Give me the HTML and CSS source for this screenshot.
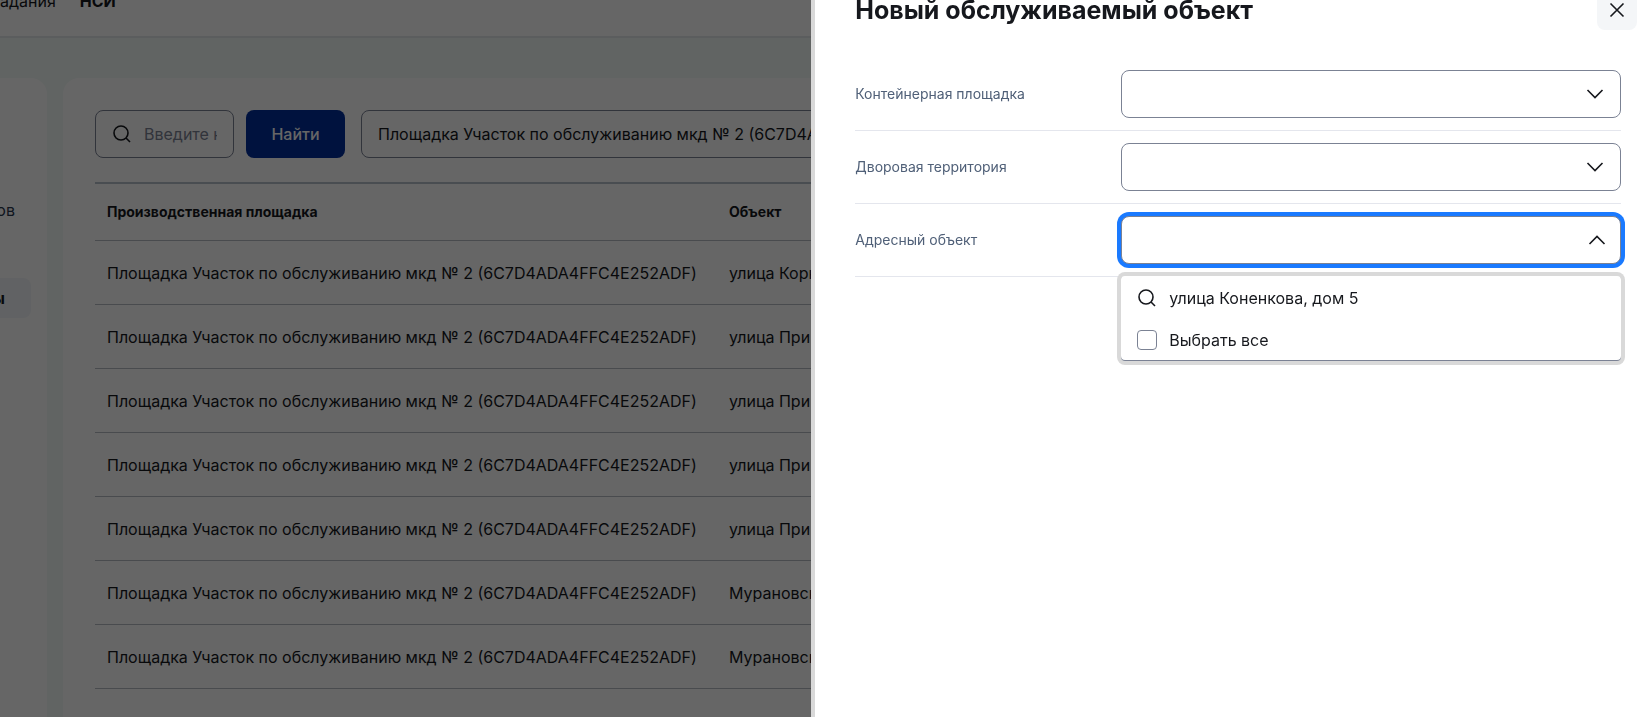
FILE: index.html
```html
<!DOCTYPE html>
<html lang="ru">
<head>
<meta charset="utf-8">
<title>Новый обслуживаемый объект</title>
<link rel="stylesheet" href="styles.css">
</head>
<body>
<div class="page">
  <header class="topbar">
    <nav class="topnav">
      <a href="#">адания</a>
      <a href="#" class="topnav-current">НСИ</a>
    </nav>
  </header>
  <div class="workspace">
    <aside class="sidebar">
      <a href="#" class="side-link">ов</a>
      <a href="#" class="side-link side-link-current">ы</a>
    </aside>
    <main class="content">
      <div class="toolbar">
        <label class="search">
          <svg class="icon" viewBox="0 0 24 24" aria-hidden="true"><circle cx="11" cy="11" r="7"/><path d="M16 16l4 4"/></svg>
          <input type="text" placeholder="Введите название" aria-label="Поиск">
        </label>
        <button class="find" type="button">Найти</button>
        <select class="site" aria-label="Площадка">
          <option>Площадка Участок по обслуживанию мкд № 2 (6C7D4ADA4FFC4E252ADF)</option>
        </select>
      </div>
      <table class="objects">
        <thead><tr><th class="col-site">Производственная площадка</th><th>Объект</th></tr></thead>
        <tbody>
          <tr><td>Площадка Участок по обслуживанию мкд № 2 (6C7D4ADA4FFC4E252ADF)</td><td>улица Корн</td></tr>
          <tr><td>Площадка Участок по обслуживанию мкд № 2 (6C7D4ADA4FFC4E252ADF)</td><td>улица При</td></tr>
          <tr><td>Площадка Участок по обслуживанию мкд № 2 (6C7D4ADA4FFC4E252ADF)</td><td>улица При</td></tr>
          <tr><td>Площадка Участок по обслуживанию мкд № 2 (6C7D4ADA4FFC4E252ADF)</td><td>улица При</td></tr>
          <tr><td>Площадка Участок по обслуживанию мкд № 2 (6C7D4ADA4FFC4E252ADF)</td><td>улица При</td></tr>
          <tr><td>Площадка Участок по обслуживанию мкд № 2 (6C7D4ADA4FFC4E252ADF)</td><td>Мурановск</td></tr>
          <tr><td>Площадка Участок по обслуживанию мкд № 2 (6C7D4ADA4FFC4E252ADF)</td><td>Мурановск</td></tr>
        </tbody>
      </table>
    </main>
  </div>
</div>

<div class="overlay">
  <section class="drawer" role="dialog" aria-labelledby="drawer-title">
    <div class="drawer-head">
      <h1 id="drawer-title">Новый обслуживаемый объект</h1>
      <button class="close" type="button" aria-label="Закрыть">
        <svg class="icon" viewBox="0 0 24 24" aria-hidden="true"><path d="M5.500 5.500l13 13M18.500 5.500l-13 13"/></svg>
      </button>
    </div>
    <form class="form">
      <div class="row">
        <label for="container">Контейнерная площадка</label>
        <div class="field">
          <select id="container"><option></option></select>
          <svg class="icon chevron" viewBox="0 0 24 24" aria-hidden="true"><path d="M4.500 8l7.500 7.500L19.500 8"/></svg>
        </div>
      </div>
      <div class="row">
        <label for="yard">Дворовая территория</label>
        <div class="field">
          <select id="yard"><option></option></select>
          <svg class="icon chevron" viewBox="0 0 24 24" aria-hidden="true"><path d="M4.500 8l7.500 7.500L19.500 8"/></svg>
        </div>
      </div>
      <div class="row">
        <label for="address">Адресный объект</label>
        <div class="field field-open">
          <select id="address"><option></option></select>
          <svg class="icon chevron" viewBox="0 0 24 24" aria-hidden="true"><path d="M4.500 16l7.500-7.500 7.500 7.500"/></svg>
          <div class="popup">
            <label class="popup-row popup-find">
              <svg class="icon" viewBox="0 0 24 24" aria-hidden="true"><circle cx="11" cy="11" r="7"/><path d="M16 16l4 4"/></svg>
              <input class="popup-search" type="text" value="улица Коненкова, дом 5" aria-label="Поиск адреса">
            </label>
            <label class="popup-row"><input class="check" type="checkbox">Выбрать все</label>
          </div>
        </div>
      </div>
    </form>
  </section>
</div>
</body>
</html>
```
FILE: styles.css
```css
* { box-sizing: border-box; }

body {
  margin: 0;
  height: 100vh;
  overflow: hidden;
  color: #16181d;
  background: #f3faf7;
  font: 16px/24px Inter, "Open Sans", sans-serif;
}

a { color: inherit; text-decoration: none; }

button, input, select {
  margin: 0;
  font: inherit;
  color: inherit;
}

.icon {
  flex: none;
  width: 24px;
  height: 24px;
  fill: none;
  stroke: #16181d;
  stroke-width: 1.6;
}

/* The page behind the drawer, scrolled down by half of its top bar. */
.page {
  display: flex;
  flex-direction: column;
  margin-top: -36px;
  height: calc(100vh + 36px);
}

.topbar {
  flex: none;
  display: flex;
  align-items: center;
  height: 74px;
  padding-top: 2px;
  background: #fff;
  border-bottom: 2px solid #e4e9ec;
}

.topnav { display: flex; gap: 24px; }
.topnav-current { font-weight: 700; }

.workspace {
  flex: 1;
  display: flex;
  gap: 16px;
  padding-top: 40px;
}

.sidebar {
  flex: none;
  display: flex;
  flex-direction: column;
  gap: 48px;
  width: 47px;
  padding: 112px 16px 0 0;
  background: #fff;
  border-radius: 0 16px 0 0;
}

.side-link {
  display: flex;
  align-items: center;
  justify-content: flex-end;
  height: 40px;
  padding-right: 16px;
  color: #29384f;
}

.side-link-current {
  padding-right: 26px;
  font-weight: 700;
  color: #16181d;
  background: #f2f5f9;
  border-radius: 0 8px 8px 0;
}

.content {
  flex: 1;
  min-width: 0;
  padding: 32px;
  background: #fff;
  border-radius: 16px 0 0 0;
}

.toolbar {
  display: flex;
  margin-bottom: 24px;
}

.search {
  display: flex;
  align-items: center;
  gap: 10px;
  width: 139px;
  height: 48px;
  padding: 0 16px 0 14px;
  border: 1px solid #7b8294;
  border-radius: 8px;
}

.search input {
  flex: 1;
  min-width: 0;
  padding: 0;
  border: 0;
  outline: 0;
  background: none;
}

.search input::placeholder { color: #7b8294; opacity: 1; }

.find {
  width: 99px;
  height: 48px;
  margin: 0 16px 0 12px;
  font-weight: 500;
  color: #fff;
  background: #002d9b;
  border: 0;
  border-radius: 8px;
}

.site {
  flex: 1;
  min-width: 0;
  height: 48px;
  padding: 0 16px;
  appearance: none;
  background: #fff;
  border: 1px solid #7b8294;
  border-radius: 8px;
}

.objects {
  width: 100%;
  table-layout: fixed;
  border-collapse: separate;
  border-spacing: 0;
  border-top: 2px solid #b7c1cb;
}

.objects th, .objects td {
  padding: 0 12px;
  text-align: left;
  white-space: nowrap;
  border-bottom: 1px solid #b7bcc4;
}

.objects th { height: 57px; font-size: 14px; font-weight: 700; }
.objects td { height: 64px; }
.col-site { width: 622px; }

.overlay {
  position: fixed;
  inset: 0;
  display: flex;
  justify-content: flex-end;
  background: rgba(0, 0, 0, 0.6);
}

.drawer {
  width: 50.5%;
  padding: 0 26px 0 40px;
  background: #fff;
  box-shadow: 0 0 0 4px #d9d9d9;
}

.drawer-head {
  display: flex;
  align-items: center;
  justify-content: space-between;
  height: 40px;
  margin: -10px -16px 28px 0;
}

h1 {
  margin: 0;
  font-size: 25px;
  line-height: 32px;
  font-weight: 700;
  white-space: nowrap;
}

.close {
  display: flex;
  align-items: center;
  justify-content: center;
  width: 40px;
  height: 40px;
  padding: 0;
  background: #f4f6f8;
  border: 0;
  border-radius: 8px;
}

.row {
  display: grid;
  grid-template-columns: 266px 1fr;
  align-items: center;
  padding: 12px 0;
  border-bottom: 1px solid #e4e6ed;
}

.row > label { font-size: 14px; color: #506078; }

.field { position: relative; height: 48px; }

.field select {
  width: 100%;
  height: 48px;
  padding: 0 16px;
  appearance: none;
  background: #fff;
  border: 1px solid #7b8294;
  border-radius: 8px;
}

.chevron {
  position: absolute;
  top: 12px;
  right: 14px;
  pointer-events: none;
}

.field-open select { box-shadow: 0 0 0 4px #1a7aff; }
.field-open .chevron { right: 12px; }

.popup {
  position: absolute;
  top: 60px;
  left: 0;
  right: 0;
  padding-top: 1px;
  background: #fff;
  border-radius: 4px;
  box-shadow: inset 0 -1px 0 #7b8294, 0 0 0 4px #d9d9d9;
}

.popup-row {
  display: flex;
  align-items: center;
  gap: 12px;
  height: 42px;
  padding: 0 16px;
}

.popup-find {
  gap: 10px;
  padding: 0 14px;
}

.popup-search {
  flex: 1;
  min-width: 0;
  padding: 0;
  border: 0;
  outline: 0;
  background: none;
}

.check {
  width: 20px;
  height: 20px;
  appearance: none;
  background: #fff;
  border: 1px solid #7b8294;
  border-radius: 4px;
}
```
